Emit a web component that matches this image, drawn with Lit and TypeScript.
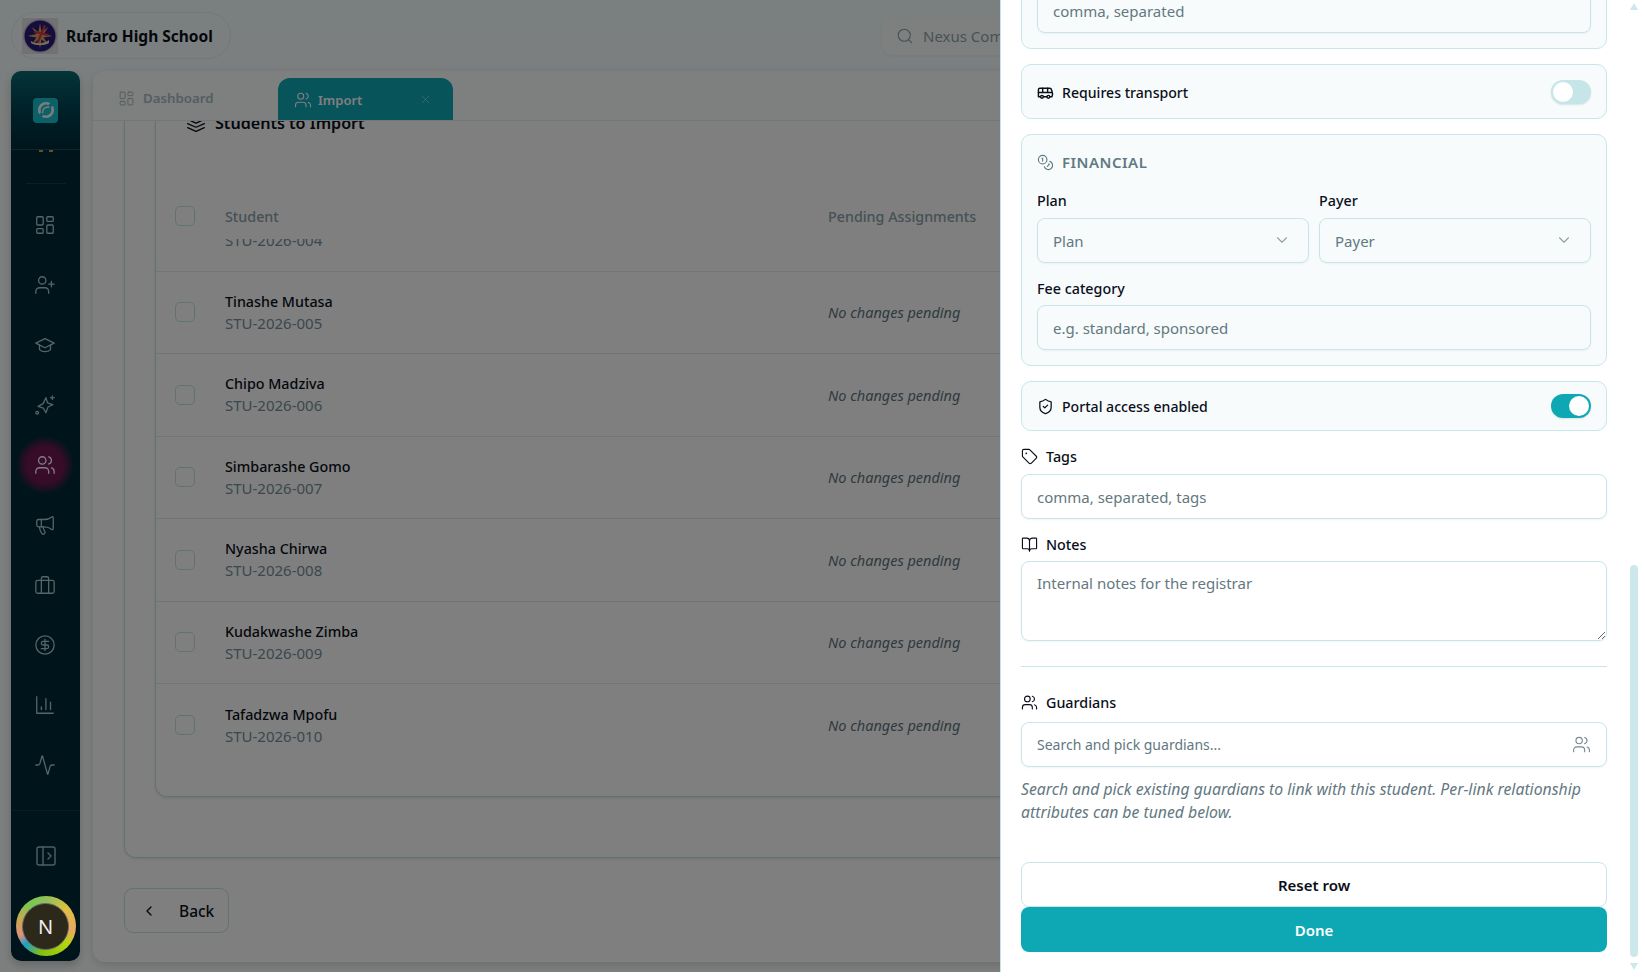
import { html, css, svg, LitElement, nothing, type TemplateResult } from 'lit'
import { customElement } from 'lit/decorators.js'

const ICONS: Record<string, TemplateResult> = {
    dashboard: svg`<rect x="3" y="3" width="7" height="9" rx="1"/><rect x="14" y="3" width="7" height="5" rx="1"/><rect x="14" y="12" width="7" height="9" rx="1"/><rect x="3" y="16" width="7" height="5" rx="1"/>`,
    userPlus: svg`<path d="M16 21v-2a4 4 0 0 0-4-4H6a4 4 0 0 0-4 4v2"/><circle cx="9" cy="7" r="4"/><path d="M19 8v6M22 11h-6"/>`,
    cap: svg`<path d="M22 10 12 5 2 10l10 5 10-5z"/><path d="M6 12v5c3 3 9 3 12 0v-5"/>`,
    sparkle: svg`<path d="M13 4l1.800 5.800 5.700 1.800-5.200 2.600-2.300 6.300-2.800-5.200L4.500 13.500l5.500-3z"/><path d="M20 2v4M18 4h4"/><circle cx="3.500" cy="20.500" r="1.500"/>`,
    users: svg`<path d="M16 21v-2a4 4 0 0 0-4-4H6a4 4 0 0 0-4 4v2"/><circle cx="9" cy="7" r="4"/><path d="M22 21v-2a4 4 0 0 0-3-3.870"/><path d="M16 3.130a4 4 0 0 1 0 7.750"/>`,
    megaphone: svg`<path d="M11 6a13 13 0 0 0 8.400-2.800A1 1 0 0 1 21 4v12a1 1 0 0 1-1.600.8A13 13 0 0 0 11 14H5a2 2 0 0 1-2-2V8a2 2 0 0 1 2-2z"/><path d="M6 14a12 12 0 0 0 2.400 7.200 2 2 0 0 0 3.200-2.400A8 8 0 0 1 10 14"/><path d="M8 6v8"/>`,
    briefcase: svg`<rect x="2" y="7" width="20" height="14" rx="2"/><path d="M16 21V5a2 2 0 0 0-2-2h-4a2 2 0 0 0-2 2v16"/>`,
    dollar: svg`<circle cx="12" cy="12" r="10"/><path d="M16 8h-6a2 2 0 1 0 0 4h4a2 2 0 1 1 0 4H8"/><path d="M12 18V6"/>`,
    chart: svg`<path d="M3 3v18h18"/><path d="M18 17V9M13 17V5M8 17v-3"/>`,
    activity: svg`<path d="M22 12h-2.480a2 2 0 0 0-1.930 1.460l-2.350 8.360a.25.25 0 0 1-.48 0L9.240 2.180a.25.25 0 0 0-.48 0l-2.350 8.360A2 2 0 0 1 4.490 12H2"/>`,
    panel: svg`<rect x="3" y="3" width="18" height="18" rx="2"/><path d="M9 3v18"/><path d="m14 9 3 3-3 3"/>`,
    search: svg`<circle cx="11" cy="11" r="8"/><path d="m21 21-4.300-4.300"/>`,
    x: svg`<path d="M18 6 6 18M6 6l12 12"/>`,
    layers: svg`<path d="M12.830 2.180a2 2 0 0 0-1.660 0L2.600 6.080a1 1 0 0 0 0 1.830l8.580 3.910a2 2 0 0 0 1.660 0l8.580-3.900a1 1 0 0 0 0-1.830Z"/><path d="m22 17.650-9.170 4.160a2 2 0 0 1-1.660 0L2 17.650"/><path d="m22 12.650-9.170 4.160a2 2 0 0 1-1.660 0L2 12.650"/>`,
    chevronLeft: svg`<path d="m15 18-6-6 6-6"/>`,
    chevronDown: svg`<path d="m6 9 6 6 6-6"/>`,
    bus: svg`<path d="M8 6v6M15 6v6M2 12h19.600"/><path d="M18 18h3s.5-1.700.8-2.800c.1-.4.2-.8.2-1.200 0-.4-.1-.8-.2-1.200l-1.400-5C20.100 6.800 19.100 6 18 6H4a2 2 0 0 0-2 2v10h3"/><circle cx="7" cy="18" r="2"/><path d="M9 18h5"/><circle cx="16" cy="18" r="2"/>`,
    coins: svg`<circle cx="8" cy="8" r="6"/><path d="M18.090 10.370A6 6 0 1 1 10.340 18"/><path d="M7 6h1v4"/><path d="m16.710 13.880.7.710-2.820 2.820"/>`,
    shield: svg`<path d="M20 13c0 5-3.500 7.500-7.660 8.950a1 1 0 0 1-.67-.01C7.500 20.500 4 18 4 13V6a1 1 0 0 1 1-1c2 0 4.500-1.200 6.240-2.720a1.170 1.170 0 0 1 1.520 0C14.510 3.810 17 5 19 5a1 1 0 0 1 1 1z"/><path d="m9 12 2 2 4-4"/>`,
    tag: svg`<path d="M12.586 2.586A2 2 0 0 0 11.172 2H4a2 2 0 0 0-2 2v7.172a2 2 0 0 0 .586 1.414l8.704 8.704a2.426 2.426 0 0 0 3.420 0l6.580-6.580a2.426 2.426 0 0 0 0-3.420z"/><circle cx="7.500" cy="7.500" r=".5" fill="currentColor"/>`,
    book: svg`<path d="M12 7v14"/><path d="M3 18a1 1 0 0 1-1-1V4a1 1 0 0 1 1-1h5a4 4 0 0 1 4 4 4 4 0 0 1 4-4h5a1 1 0 0 1 1 1v13a1 1 0 0 1-1 1h-6a3 3 0 0 0-3 3 3 3 0 0 0-3-3z"/>`,
}

const icon = (name: string, size = 20, sw = 1.5) => html`<svg
    class="ic"
    width=${size}
    height=${size}
    viewBox="0 0 24 24"
    fill="none"
    stroke="currentColor"
    stroke-width=${sw}
    stroke-linecap="round"
    stroke-linejoin="round"
>${ICONS[name]}</svg>`

const NAV = ['dashboard', 'userPlus', 'cap', 'sparkle', 'users', 'megaphone', 'briefcase', 'dollar', 'chart', 'activity']

// the first row is scrolled under the table head, only its code peeks out
const STUDENTS = [
    ['', 'STU-2026-004'],
    ['Tinashe Mutasa', 'STU-2026-005'],
    ['Chipo Madziva', 'STU-2026-006'],
    ['Simbarashe Gomo', 'STU-2026-007'],
    ['Nyasha Chirwa', 'STU-2026-008'],
    ['Kudakwashe Zimba', 'STU-2026-009'],
    ['Tafadzwa Mpofu', 'STU-2026-010'],
]

@customElement('app-root')
export class AppRoot extends LitElement {
    static styles = css`
        :host {
            display: block;
            position: relative;
            height: 978px;
            overflow: hidden;
            background: #fff;
            font-family: 'Noto Sans', sans-serif;
            color: #0a0f1a;
        }
        * {
            box-sizing: border-box;
        }
        .ic {
            display: block;
            flex: none;
        }

        .page {
            height: 972px;
            overflow: hidden;
            background: linear-gradient(#f4ffff, #fbfdfd 130px);
        }
        .topbar {
            height: 71px;
            padding: 12px 11px 0;
            display: flex;
            align-items: flex-start;
        }
        .school {
            width: 220px;
            height: 47px;
            border: 1px solid #e6f2f2;
            border-radius: 24px;
            display: flex;
            align-items: center;
            gap: 8px;
            padding-left: 10px;
            font-size: 15.500px;
            font-weight: 700;
        }
        .search {
            margin-left: 651px;
            margin-top: 5px;
            width: 420px;
            height: 38px;
            border-radius: 10px;
            background: #fdffff;
            display: flex;
            align-items: center;
            gap: 9px;
            padding-left: 14px;
            color: #8fa5ac;
            font-size: 15px;
            box-shadow: 0 1px 3px rgba(0, 40, 50, 0.06);
        }
        .body {
            display: grid;
            grid-template-columns: 69px 1fr;
            gap: 13px;
            padding: 0 11px;
        }

        .side {
            height: 890px;
            border-radius: 10px;
            background: linear-gradient(#0a6a72, #004050 40px, #002a36 80px);
            display: flex;
            flex-direction: column;
            align-items: center;
            color: #a8ccd2;
            box-shadow: 0 4px 10px rgba(0, 0, 0, 0.2);
        }
        .brand {
            height: 79px;
            width: 100%;
            flex: none;
            display: flex;
            align-items: center;
            justify-content: center;
            border-bottom: 1px solid #0c5566;
        }
        .brand span {
            width: 25px;
            height: 25px;
            border-radius: 4px;
            background: #17c2cf;
            display: grid;
            place-items: center;
        }
        .peek {
            flex: none;
            width: 14px;
            height: 2px;
            display: flex;
            justify-content: space-between;
        }
        .peek i {
            width: 4px;
            height: 2px;
            background: #c8a830;
        }
        .rule {
            width: 40px;
            height: 1px;
            margin-top: 31px;
            background: #0d4553;
            flex: none;
        }
        .nav {
            margin-top: 11px;
            margin-right: 2px;
            display: flex;
            flex-direction: column;
            align-items: center;
        }
        .nav div {
            width: 56px;
            height: 60px;
            display: grid;
            place-items: center;
            border-radius: 50%;
        }
        .nav div.on {
            color: #fff;
            background: radial-gradient(circle, #741a58 0, #6c1850 45%, rgba(108, 24, 80, 0) 72%);
        }
        .side-foot {
            width: 100%;
            margin-top: 15px;
            border-top: 1px solid #063c49;
            display: flex;
            flex-direction: column;
            align-items: center;
            padding-top: 33px;
            color: #9cc4ca;
        }
        /* the avatar ring sits above the dim layer */
        .avatar {
            position: relative;
            z-index: 1;
            margin-top: 28px;
            width: 60px;
            height: 60px;
            border-radius: 50%;
            background: conic-gradient(#8fc05a 0, #e0c040 50deg, #eaa860 100deg, #b4d60c 130deg, #84c00c 190deg, #1aa0c8 228deg, #e0907a 250deg, #c8aa50 285deg, #78c850 325deg, #8fc05a 360deg);
            display: grid;
            place-items: center;
        }
        .avatar span {
            width: 47px;
            height: 47px;
            border-radius: 50%;
            background: #2c281a;
            border: 1px solid #666;
            color: #eee;
            display: grid;
            place-items: center;
            font-size: 20px;
            font-weight: 400;
        }

        .main {
            height: 891px;
            border-radius: 12px 0 0 12px;
            background: #fff;
            overflow: hidden;
            display: flex;
            flex-direction: column;
            box-shadow: 0 3px 10px rgba(0, 0, 0, 0.14);
        }
        .tabs {
            height: 50px;
            flex: none;
            border-bottom: 1px solid #e3eeee;
            display: flex;
            align-items: flex-end;
            padding-left: 25px;
            background: #fcfefe;
        }
        .tab {
            display: flex;
            align-items: center;
            font-size: 13.300px;
            font-weight: 600;
            color: #a8bcc4;
        }
        .tab.plain {
            width: 160px;
            height: 49px;
            gap: 8px;
            padding-top: 5px;
        }
        .tab.active {
            width: 175px;
            height: 42px;
            border-radius: 12px 12px 0 0;
            background: #0ea8b5;
            color: #fff;
            padding: 1px 21px 0 16px;
            gap: 6px;
            font-size: 13px;
        }
        .tab.active .ic:last-child {
            margin-left: auto;
            color: #7fd8df;
        }
        .scroll {
            flex: 1;
            overflow: hidden;
            padding: 0 30px 0 31px;
        }
        .outer {
            height: 737px;
            border: 1px solid #c5e3e8;
            border-top: 0;
            border-radius: 0 0 12px 12px;
            padding: 0 30px;
            box-shadow: 0 1px 3px rgba(0, 50, 60, 0.12);
        }
        .inner {
            height: 676px;
            border: 1px solid #c5e3e8;
            border-top: 0;
            border-radius: 0 0 12px 12px;
            box-shadow: 0 1px 3px rgba(0, 50, 60, 0.12);
            overflow: hidden;
        }
        .title {
            height: 4px;
            margin-left: 30px;
            display: flex;
            align-items: center;
            gap: 9px;
            font-size: 16.100px;
            font-weight: 600;
        }
        .head,
        .row {
            display: grid;
            grid-template-columns: 50px 603px 1fr;
            align-items: center;
            padding-left: 19px;
        }
        .head {
            margin-top: 68px;
            height: 46px;
            font-size: 14.300px;
            font-weight: 500;
            color: #8ba2a9;
        }
        .rows {
            height: 558px;
            overflow: hidden;
        }
        .rows-in {
            margin-top: -50px;
        }
        .row {
            height: 82.500px;
            border-bottom: 1px solid #e0eaea;
        }
        .row:last-child {
            border-bottom: 0;
        }
        .box {
            width: 20px;
            height: 20px;
            border: 1px solid #c5e3e8;
            border-radius: 5px;
        }
        .name {
            font-size: 14.300px;
            font-weight: 500;
            line-height: 21px;
            min-height: 21px;
        }
        .code {
            font-size: 15px;
            line-height: 22px;
            color: #748f9a;
        }
        .none {
            font-size: 14.500px;
            font-style: italic;
            color: #5e747c;
        }
        .back {
            margin-top: 30px;
            width: 105px;
            height: 45px;
            border: 1px solid #c5e3e8;
            border-radius: 9px;
            display: flex;
            align-items: center;
            padding-left: 16px;
            gap: 22px;
            font-size: 15.500px;
            font-weight: 500;
        }

        .shade {
            position: absolute;
            left: 0;
            top: 0;
            right: 0;
            height: 972px;
            background: rgba(0, 0, 0, 0.5);
        }

        .drawer {
            position: absolute;
            z-index: 2;
            left: 1000px;
            top: 0;
            right: 0;
            height: 978px;
            background: #fff;
            overflow: hidden;
        }
        .form {
            height: 972px;
            border-left: 1px solid #c5e3e8;
            width: 607px;
            padding-left: 20px;
            display: flex;
            flex-direction: column;
            font-size: 14.100px;
        }
        .card {
            flex: none;
            background: #f7fbfc;
            border: 1px solid #c8e6ea;
            border-radius: 10px;
            padding: 15px;
            margin-bottom: 15px;
        }
        .card.first {
            margin-top: -28px;
        }
        .switch-row {
            display: flex;
            align-items: center;
            gap: 8px;
            font-weight: 500;
            padding: 15px 15px 14px;
        }
        .card.portal {
            padding: 12px 15px;
            margin-bottom: 15px;
        }
        .switch-row .toggle {
            margin-left: auto;
        }
        .toggle {
            width: 40px;
            height: 24px;
            border-radius: 12px;
            background: #c6e5e8;
            padding: 2px;
            box-shadow: 0 1px 2px rgba(0, 50, 60, 0.12);
        }
        .toggle i {
            display: block;
            width: 20px;
            height: 20px;
            border-radius: 50%;
            background: #fff;
        }
        .toggle.on {
            background: #0ea8b5;
            display: flex;
            justify-content: flex-end;
        }
        .fin-head {
            height: 24px;
            margin-bottom: 16px;
            display: flex;
            align-items: center;
            gap: 8px;
            color: #5f7a82;
            font-size: 15px;
            font-weight: 600;
            letter-spacing: 0.5px;
        }
        .two {
            display: grid;
            grid-template-columns: 1fr 1fr;
            gap: 10px;
            margin-bottom: 15px;
        }
        label {
            display: flex;
            align-items: center;
            gap: 8px;
            height: 20px;
            margin-bottom: 8px;
            font-size: 14.300px;
            font-weight: 500;
            flex: none;
        }
        input,
        textarea,
        .select {
            display: block;
            width: 100%;
            height: 45px;
            flex: none;
            border: 1px solid #c8e6ea;
            border-radius: 8px;
            background: #fff;
            padding: 0 15px;
            font: 15px 'Noto Sans', sans-serif;
            color: #0a0f1a;
            outline: none;
            box-shadow: 0 1px 2px rgba(0, 50, 60, 0.05);
        }
        input::placeholder,
        textarea::placeholder {
            color: #63787f;
            opacity: 1;
        }
        .card input,
        .select {
            background: #f7fbfc;
        }
        .select {
            display: flex;
            align-items: center;
            justify-content: space-between;
            color: #63787f;
        }
        .select .ic {
            color: #8ea2a8;
            margin: -2px 2px 0 0;
        }
        textarea {
            height: 80px;
            padding-top: 10px;
            line-height: 22px;
        }
        .notes {
            margin-top: 15px;
            margin-bottom: 7px;
        }
        .fee {
            margin-bottom: 7px;
        }
        .divider {
            flex: none;
            height: 1px;
            margin: 25px 0 25px;
            background: #c8e6ea;
        }
        .picker {
            position: relative;
            flex: none;
            margin-top: 2px;
        }
        .picker input {
            font-size: 14px;
        }
        .picker .ic {
            position: absolute;
            right: 16px;
            top: 13px;
            color: #77898f;
        }
        .help {
            margin: 11px 0 38px;
            font-size: 15.770px;
            line-height: 23px;
            font-style: italic;
            color: #63787f;
        }
        .btn {
            flex: none;
            height: 45px;
            border-radius: 8px;
            display: grid;
            place-items: center;
            font-size: 15px;
            font-weight: 600;
        }
        .btn.reset {
            border: 1px solid #c8e6ea;
            background: #fff;
        }
        .btn.done {
            background: #0ea8b5;
            color: #fff;
        }
        .bar {
            position: absolute;
            left: 630px;
            width: 8px;
        }
        .bar.thumb {
            top: 565px;
            height: 392px;
            border-radius: 4px;
            background: #cde8ea;
        }
        .bar.up,
        .bar.down {
            height: 0;
            border-left: 4px solid transparent;
            border-right: 4px solid transparent;
        }
        .bar.up {
            top: 3px;
            border-bottom: 7px solid #cde8ea;
        }
        .bar.down {
            top: 963px;
            border-top: 7px solid #cde8ea;
        }
    `

    private crest() {
        return html`<svg width="36" height="36" viewBox="0 0 36 36">
            <rect width="36" height="36" fill="#e4e2e6" />
            <circle cx="18" cy="18" r="17" fill="#c9c4d2" />
            <circle cx="18" cy="18" r="15.500" fill="#2a1a78" />
            <path d="M18 5l1.500 9 7-5-5 7 9 2-9 1.500 5 7-7-5-1.500 9-1.500-9-7 5 5-7-9-1.500 9-2-5-7 7 5z" fill="#d8a25a" />
            <path d="M22 7l2 1-3 7 6 1-1 2-6-1-4 10-2-1 4-10-6-1 1-2 6 1z" fill="#d8364a" />
            <path d="M9 23c4 3 13 3 18-1v3c-5 3-13 3-18 0z" fill="#e8dcc0" />
        </svg>`
    }

    private sideLogo() {
        return html`<svg width="18" height="18" viewBox="0 0 24 24" fill="none">
            <circle cx="12" cy="12" r="9" stroke="#f2fbfb" stroke-width="3.500" />
            <path d="M3 21 21 3" stroke="#17c2cf" stroke-width="5" />
            <path d="M7.500 16.500c-1-5 3-9 9-9" stroke="#f2fbfb" stroke-width="2" />
        </svg>`
    }

    render() {
        return html`
            <div class="page">
                <div class="topbar">
                    <div class="school">${this.crest()}<span>Rufaro High School</span></div>
                    <div class="search">${icon('search', 18)}<span>Nexus Command</span></div>
                </div>
                <div class="body">
                    <aside class="side">
                        <div class="brand"><span>${this.sideLogo()}</span></div>
                        <div class="peek"><i></i><i></i></div>
                        <div class="rule"></div>
                        <div class="nav">
                            ${NAV.map((n) => html`<div class=${n === 'users' ? 'on' : ''}>${icon(n, 22, 1.4)}</div>`)}
                        </div>
                        <div class="side-foot">
                            ${icon('panel', 24, 1.4)}
                            <div class="avatar"><span>N</span></div>
                        </div>
                    </aside>
                    <main class="main">
                        <div class="tabs">
                            <div class="tab plain">${icon('dashboard', 17, 1.4)}Dashboard</div>
                            <div class="tab active">${icon('users', 18, 1.5)}Import${icon('x', 13, 1.5)}</div>
                        </div>
                        <div class="scroll">
                            <div class="outer">
                                <div class="inner">
                                    <div class="title">${icon('layers', 20, 1.6)}Students to Import</div>
                                    <div class="head">
                                        <div class="box"></div>
                                        <div>Student</div>
                                        <div>Pending Assignments</div>
                                    </div>
                                    <div class="rows">
                                        <div class="rows-in">
                                            ${STUDENTS.map(
                                                ([name, code]) => html`<div class="row">
                                                    ${name ? html`<div class="box"></div>` : html`<div></div>`}
                                                    <div>
                                                        <div class="name">${name}</div>
                                                        <div class="code">${code}</div>
                                                    </div>
                                                    ${name ? html`<div class="none">No changes pending</div>` : nothing}
                                                </div>`
                                            )}
                                        </div>
                                    </div>
                                </div>
                            </div>
                            <div class="back">${icon('chevronLeft', 16, 2)}Back</div>
                        </div>
                    </main>
                </div>
            </div>
            <div class="shade"></div>
            <section class="drawer">
                <div class="form">
                    <div class="card first"><input placeholder="comma, separated" /></div>
                    <div class="card switch-row">
                        ${icon('bus', 17, 2)}<span>Requires transport</span>
                        <div class="toggle"><i></i></div>
                    </div>
                    <div class="card">
                        <div class="fin-head">${icon('coins', 17, 1.6)}FINANCIAL</div>
                        <div class="two">
                            <div>
                                <label>Plan</label>
                                <div class="select">Plan${icon('chevronDown', 18, 1.5)}</div>
                            </div>
                            <div>
                                <label>Payer</label>
                                <div class="select">Payer${icon('chevronDown', 18, 1.5)}</div>
                            </div>
                        </div>
                        <label class="fee">Fee category</label>
                        <input placeholder="e.g. standard, sponsored" />
                    </div>
                    <div class="card switch-row portal">
                        ${icon('shield', 17, 1.8)}<span>Portal access enabled</span>
                        <div class="toggle on"><i></i></div>
                    </div>
                    <label>${icon('tag', 17, 1.6)}Tags</label>
                    <input placeholder="comma, separated, tags" />
                    <label class="notes">${icon('book', 17, 1.6)}Notes</label>
                    <textarea placeholder="Internal notes for the registrar"></textarea>
                    <div class="divider"></div>
                    <label>${icon('users', 17, 1.6)}Guardians</label>
                    <div class="picker">
                        <input placeholder="Search and pick guardians..." />
                        ${icon('users', 19, 1.4)}
                    </div>
                    <div class="help">
                        Search and pick existing guardians to link with this student. Per-link relationship
                        attributes can be tuned below.
                    </div>
                    <div class="btn reset">Reset row</div>
                    <div class="btn done">Done</div>
                </div>
                <div class="bar up"></div>
                <div class="bar thumb"></div>
                <div class="bar down"></div>
            </section>
        `
    }
}
